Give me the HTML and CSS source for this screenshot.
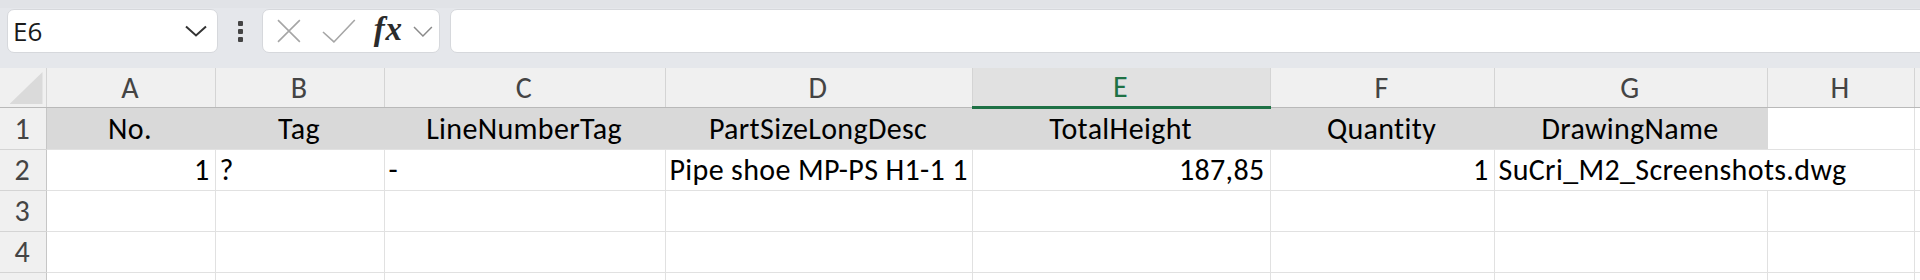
FILE: index.html
```html
<!DOCTYPE html>
<html>
<head>
    <title>Sheet1</title>
    <link rel="stylesheet" href="styles.css">
</head>
<body>
    <div class="toolbar">
        <div class="name-box">
            <span class="cell-ref">E6</span>
            <svg class="chevron" width="22" height="12" viewBox="0 0 22 12">
                <path d="M1 1.5 L11 10.5 L21 1.5" fill="none" stroke="#333" stroke-width="2"/>
            </svg>
        </div>
        <div class="more">
            <span></span><span></span><span></span>
        </div>
        <div class="fx-box">
            <svg class="icon-x" width="24" height="24" viewBox="0 0 24 24">
                <path d="M1 1 L23 23 M23 1 L1 23" fill="none" stroke="#a6a6a6" stroke-width="1.6"/>
            </svg>
            <svg class="icon-check" width="34" height="24" viewBox="0 0 34 24">
                <path d="M1 13 L12 23 L33 1" fill="none" stroke="#a6a6a6" stroke-width="1.6"/>
            </svg>
            <span class="fx">fx</span>
            <svg class="chevron-small" width="20" height="11" viewBox="0 0 20 11">
                <path d="M1 1 L10 10 L19 1" fill="none" stroke="#8a8a8a" stroke-width="1.5"/>
            </svg>
        </div>
        <div class="formula"></div>
    </div>

    <table class="sheet">
        <colgroup>
            <col class="w-head">
            <col class="w-a">
            <col class="w-b">
            <col class="w-c">
            <col class="w-d">
            <col class="w-e">
            <col class="w-f">
            <col class="w-g">
            <col class="w-h">
            <col class="w-i">
        </colgroup>
        <tr class="col-heads">
            <th class="corner"><div class="triangle"></div></th>
            <th>A</th>
            <th>B</th>
            <th>C</th>
            <th>D</th>
            <th class="active">E</th>
            <th>F</th>
            <th>G</th>
            <th>H</th>
            <th></th>
        </tr>
        <tr class="title-row">
            <th class="row-head">1</th>
            <td class="fill center">No.</td>
            <td class="fill center">Tag</td>
            <td class="fill center">LineNumberTag</td>
            <td class="fill center">PartSizeLongDesc</td>
            <td class="fill center">TotalHeight</td>
            <td class="fill center">Quantity</td>
            <td class="fill center">DrawingName</td>
            <td></td>
            <td></td>
        </tr>
        <tr>
            <th class="row-head">2</th>
            <td class="num">1</td>
            <td>?</td>
            <td>-</td>
            <td>Pipe shoe MP-PS H1-1 1</td>
            <td class="num">187,85</td>
            <td class="num">1</td>
            <td class="spill">SuCri_M2_Screenshots.dwg</td>
            <td></td>
            <td></td>
        </tr>
        <tr>
            <th class="row-head">3</th>
            <td></td><td></td><td></td><td></td><td></td><td></td><td></td><td></td><td></td>
        </tr>
        <tr>
            <th class="row-head">4</th>
            <td></td><td></td><td></td><td></td><td></td><td></td><td></td><td></td><td></td>
        </tr>
        <tr>
            <th class="row-head"></th>
            <td></td><td></td><td></td><td></td><td></td><td></td><td></td><td></td><td></td>
        </tr>
    </table>
</body>
</html>
```

FILE: styles.css
```css
html {
    height: 280px;
    overflow: hidden;
}

body {
    margin: 0;
    height: 280px;
    background-color: #ffffff;
    font-family: Carlito, Calibri, Lato, sans-serif;
    overflow: hidden;
}

/* Formula bar */
.toolbar {
    display: flex;
    align-items: flex-start;
    height: 68px;
    padding: 1px 0 0 7px;
    box-sizing: border-box;
    background-color: #e5e7eb;
    border-top: 8px solid #e1e3e7;
}

.name-box {
    display: flex;
    align-items: center;
    width: 211px;
    height: 44px;
    box-sizing: border-box;
    padding: 0 10px 0 5px;
    background-color: #ffffff;
    border: 1px solid #d6d8dc;
    border-radius: 7px;
}

.cell-ref {
    flex: 1;
    font-family: "Open Sans", "Noto Sans", sans-serif;
    font-size: 26px;
    color: #1a1a1a;
}

.more {
    display: flex;
    flex-direction: column;
    align-items: center;
    gap: 3px;
    width: 44px;
    padding-top: 12px;
}

.more span {
    width: 5px;
    height: 5px;
    background-color: #444;
    border-radius: 1px;
}

.fx-box {
    display: flex;
    align-items: center;
    width: 178px;
    height: 44px;
    box-sizing: border-box;
    padding: 0 6px 0 14px;
    background-color: #ffffff;
    border: 1px solid #d6d8dc;
    border-radius: 7px;
}

.icon-x {
    margin-right: 21px;
}

.icon-check {
    margin-right: 18px;
}

.fx {
    font-family: "Liberation Serif", serif;
    font-style: italic;
    font-weight: bold;
    font-size: 33px;
    color: #2b2b2b;
    margin-right: 10px;
    margin-top: -3px;
    letter-spacing: 1px;
}

.formula {
    flex: 1;
    height: 44px;
    margin-left: 10px;
    margin-right: -12px;
    background-color: #ffffff;
    border: 1px solid #d6d8dc;
    border-radius: 7px;
    box-sizing: border-box;
}

/* Grid */
.sheet {
    width: 1920px;
    table-layout: fixed;
    border-collapse: collapse;
    font-size: 30px;
    letter-spacing: 0.35px;
    color: #000;
}

.w-head { width: 46px; }
.w-a { width: 169px; }
.w-b { width: 169px; }
.w-c { width: 281px; }
.w-d { width: 307px; }
.w-e { width: 298px; }
.w-f { width: 224px; }
.w-g { width: 273px; }
.w-h { width: 147px; }
.w-i { width: 6px; }

.sheet th,
.sheet td {
    padding: 0 5px 5px 4px;
    white-space: nowrap;
    overflow: hidden;
    vertical-align: bottom;
    line-height: 30px;
    text-align: left;
    border-right: 1px solid #e1e1e1;
    border-bottom: 1px solid #e1e1e1;
}

.sheet th {
    font-weight: normal;
    color: #444;
    text-align: center;
    background-color: #f0f0f0;
}

.col-heads th {
    height: 34px;
    padding-bottom: 4px;
    border-right-color: #d4d4d4;
    border-bottom: 1px solid #b9b9b9;
}

.col-heads th.active {
    background-color: #e1e1e1;
    color: #1e7145;
    border-bottom: 3px solid #1e7145;
}

.corner {
    padding: 0 3px 3px 0 !important;
}

.triangle {
    width: 33px;
    height: 32px;
    margin-left: auto;
    background-color: #dadada;
    clip-path: polygon(100% 0, 100% 100%, 0 100%);
}

.row-head {
    height: 35px;
    border-right: 1px solid #c6c6c6 !important;
    border-bottom-color: #d4d4d4 !important;
}

.title-row .row-head {
    height: 36px;
}

.fill {
    background-color: #d9d9d9;
    border-right-color: #d9d9d9 !important;
}

.center {
    text-align: center !important;
}

.num {
    text-align: right !important;
}

.spill {
    overflow: visible !important;
    border-right-style: hidden !important;
}
```
